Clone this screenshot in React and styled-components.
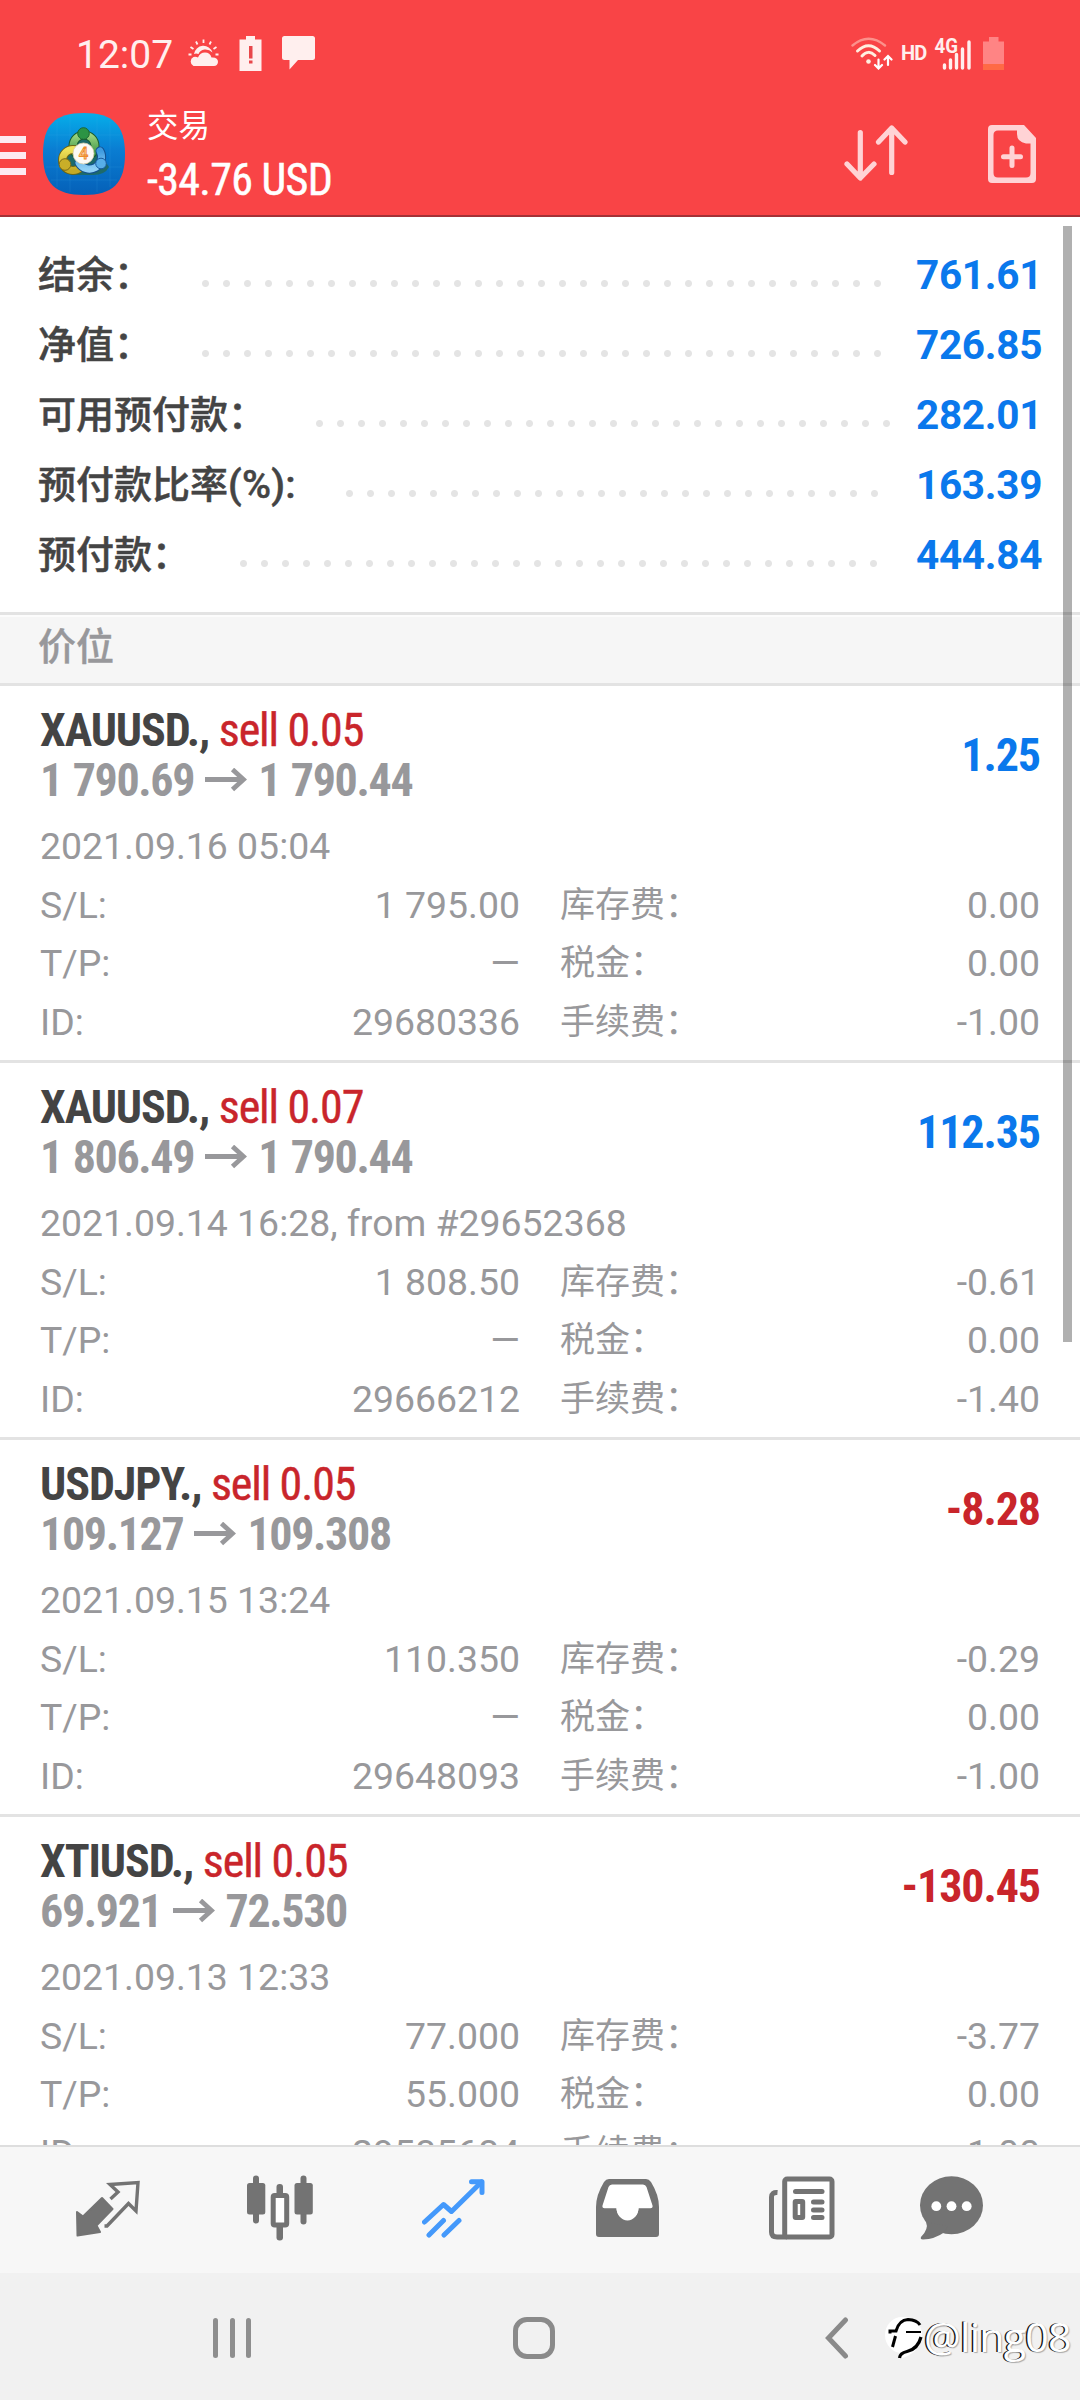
import React from 'react';
import styled, { createGlobalStyle } from 'styled-components';

const GlobalStyle = createGlobalStyle`
  * {
    box-sizing: border-box;
  }
  body {
    margin: 0;
    background: #fff;
    font-family: Roboto, 'Noto Sans CJK SC', sans-serif;
  }
  svg {
    display: block;
    flex: none;
  }
`;

const summary = [
  { label: '结余：', value: '761.61' },
  { label: '净值：', value: '726.85' },
  { label: '可用预付款：', value: '282.01' },
  { label: '预付款比率', unit: '(%):', value: '163.39' },
  { label: '预付款：', value: '444.84' },
];

const positions = [
  {
    symbol: 'XAUUSD.,',
    side: 'sell 0.05',
    open: '1 790.69',
    current: '1 790.44',
    profit: '1.25',
    time: '2021.09.16 05:04',
    sl: '1 795.00',
    tp: '—',
    id: '29680336',
    swap: '0.00',
    tax: '0.00',
    fee: '-1.00',
  },
  {
    symbol: 'XAUUSD.,',
    side: 'sell 0.07',
    open: '1 806.49',
    current: '1 790.44',
    profit: '112.35',
    time: '2021.09.14 16:28, from #29652368',
    sl: '1 808.50',
    tp: '—',
    id: '29666212',
    swap: '-0.61',
    tax: '0.00',
    fee: '-1.40',
  },
  {
    symbol: 'USDJPY.,',
    side: 'sell 0.05',
    open: '109.127',
    current: '109.308',
    profit: '-8.28',
    time: '2021.09.15 13:24',
    sl: '110.350',
    tp: '—',
    id: '29648093',
    swap: '-0.29',
    tax: '0.00',
    fee: '-1.00',
  },
  {
    symbol: 'XTIUSD.,',
    side: 'sell 0.05',
    open: '69.921',
    current: '72.530',
    profit: '-130.45',
    time: '2021.09.13 12:33',
    sl: '77.000',
    tp: '55.000',
    id: '29585684',
    swap: '-3.77',
    tax: '0.00',
    fee: '-1.00',
  },
];

function WeatherIcon() {
  return (
    <svg width='31' height='28' viewBox='0 0 31 28' fill='#ffefee'>
      <path d='M6 15A9.5 9.5 0 0 1 24.5 13.5Q21 10 16.5 10.5Q12 11 10.5 15Q8 14 6 15Z' />
      <path d='M5.5 27A5 5 0 0 1 5.5 18Q8 17.5 10 18.5Q12 13.5 17 13.5Q22 13.5 23.5 18.5Q30 18 30 23Q29.5 27 26 27Z' />
      <path
        d='M15.5 0.5V4M8 2.5L9.5 5.5M23 2.5L21.5 5.5M2.5 8L5.5 10M28.5 8L25.5 10M0.5 15.5H3.5M27.5 15.5H30.5'
        stroke='#ffefee'
        strokeWidth='1.8'
      />
    </svg>
  );
}

function BatteryAlertIcon() {
  return (
    <svg width='23' height='35' viewBox='0 0 23 35'>
      <path d='M7 0H16V3.5H22.5V35H0.5V3.5H7Z' fill='#ffefee' />
      <path d='M10 10H13.5V22.5H10ZM10 24.5H13.5V27.5H10Z' fill='#e8474a' />
    </svg>
  );
}

function MessageIcon() {
  return (
    <svg width='33' height='34' viewBox='0 0 33 34'>
      <path
        d='M2.5 0H30.5Q33 0 33 2.5V21.5Q33 24 30.5 24H16L7.5 33.5V24H2.5Q0 24 0 21.5V2.5Q0 0 2.5 0Z'
        fill='#ffefee'
      />
    </svg>
  );
}

function WifiIcon() {
  return (
    <svg width='42' height='33' viewBox='0 0 42 33' fill='none' stroke='#ffefdf' strokeLinecap='round'>
      <path d='M1.5 8.5Q17.5 -5 34 8.5' strokeWidth='2.4' opacity='0.45' />
      <path d='M6.5 14Q17.5 3.5 28.5 14' strokeWidth='3' />
      <path d='M11 19Q17.5 12 24 18.5' strokeWidth='3' />
      <circle cx='17.5' cy='24.5' r='2.3' fill='#ffefdf' stroke='none' />
      <path
        d='M27.5 22.5V31M24 28L27.5 31.5L31 28M37 28V19.5M33.5 22.5L37 19L40.5 22.5'
        stroke='#fff'
        strokeWidth='2.2'
      />
    </svg>
  );
}

function SignalIcon() {
  return (
    <svg width='39' height='33' viewBox='0 0 39 33' overflow='visible'>
      <text x='1.5' y='16' fontSize='19.5' fontWeight='700' fill='#ffefee' textLength='23.5' lengthAdjust='spacingAndGlyphs'>
        4G
      </text>
      <path
        d='M11.5 28V31M17.5 23V31M23.5 17.5V31M29.5 12V31M36 5V31'
        stroke='#ffefee'
        strokeWidth='3.4'
        strokeLinecap='round'
      />
    </svg>
  );
}

function BatteryIcon() {
  return (
    <svg width='21' height='33' viewBox='0 0 21 33'>
      <path d='M6 0H15.5V4.5H21V33H0V4.5H6Z' fill='#ff8484' />
      <path d='M0 27H21V33H0Z' fill='#ff6a45' />
    </svg>
  );
}

function Logo() {
  return (
    <svg width='82' height='82' viewBox='0 0 82 82'>
      <defs>
        <linearGradient id='logo-bg' x1='0' y1='0' x2='0' y2='1'>
          <stop offset='0' stopColor='#06aeea' />
          <stop offset='0.45' stopColor='#0a7dd2' />
          <stop offset='1' stopColor='#0560b8' />
        </linearGradient>
        <linearGradient id='logo-green' x1='0' y1='0' x2='0' y2='1'>
          <stop offset='0' stopColor='#9bd47e' />
          <stop offset='1' stopColor='#2d8a3c' />
        </linearGradient>
        <linearGradient id='logo-yellow' x1='0' y1='0' x2='0' y2='1'>
          <stop offset='0' stopColor='#f0e25a' />
          <stop offset='1' stopColor='#c4aa26' />
        </linearGradient>
        <linearGradient id='logo-blue' x1='0' y1='0' x2='0' y2='1'>
          <stop offset='0' stopColor='#3f9be0' />
          <stop offset='1' stopColor='#8fd0f5' />
        </linearGradient>
      </defs>
      <path
        d='M41 0C70 0 82 12 82 41C82 70 70 82 41 82C12 82 0 70 0 41C0 12 12 0 41 0Z'
        fill='url(#logo-bg)'
      />
      <path d='M14 8V74M27 3V79M54 3V79M67 8V74M5 22H77M3 54H79M8 67H74' stroke='#4fb4ee' strokeWidth='0.7' opacity='0.2' />
      {/* three interlocked rings */}
      <path d='M41 16L66 54Q62 62 50 62H32Q20 62 17 54Z' fill='#1d6a6b' />
      <g fill='none' strokeLinecap='round'>
        <circle cx='41' cy='33' r='11' stroke='#185c30' strokeWidth='9' />
        <circle cx='41' cy='33' r='11' stroke='url(#logo-green)' strokeWidth='7' />
        <circle cx='30' cy='47' r='10.5' stroke='#6e6515' strokeWidth='9' />
        <circle cx='30' cy='47' r='10.5' stroke='url(#logo-yellow)' strokeWidth='7' />
        <path d='M57 38A11.5 11.5 0 1 1 36 50' stroke='#12508f' strokeWidth='9' />
        <path d='M57 38A11.5 11.5 0 1 1 36 50' stroke='url(#logo-blue)' strokeWidth='7' />
      </g>
      <circle cx='40.5' cy='20.5' r='5.8' fill='#2c9444' stroke='#1c6431' />
      <circle cx='22' cy='51.5' r='5.8' fill='#c9ae28' stroke='#7a6a18' />
      <circle cx='58' cy='50.5' r='5.3' fill='#57aee8' stroke='#195ca0' />
      <circle cx='40.5' cy='40.5' r='10.5' fill='#fcfaf5' stroke='#d8cfae' strokeWidth='0.8' />
      <text x='40.5' y='46.3' fontSize='16.5' fontWeight='500' fill='#fbd9a4' stroke='#ee8a2a' strokeWidth='0.9' textAnchor='middle'>
        4
      </text>
    </svg>
  );
}

function SortIcon() {
  return (
    <svg width='64' height='56' viewBox='0 0 64 56' fill='none' stroke='#ffd3d5' strokeWidth='5.2' strokeLinecap='round' strokeLinejoin='round'>
      <path d='M16.3 7.5V52M3 39L16.3 53L30 39' />
      <path d='M47.7 47.5V3M34.5 17L47.7 3L61 17' />
    </svg>
  );
}

function NewOrderIcon() {
  return (
    <svg width='48' height='58' viewBox='0 0 48 58'>
      <path
        fillRule='evenodd'
        d='M4 0H36L48 13V54Q48 58 44 58H4Q0 58 0 54V4Q0 0 4 0ZM10 5.5Q5.5 5.5 5.5 10V48Q5.5 52.5 10 52.5H38Q42.5 52.5 42.5 48V18.5H38Q29 17 29 9V5.5Z'
        fill='#ffd3d5'
      />
      <path d='M24 23V40.5M15.5 31.7H32.5' stroke='#ffd3d5' strokeWidth='5' strokeLinecap='round' />
    </svg>
  );
}

function PriceArrow() {
  return (
    <svg width='42' height='24' viewBox='0 0 42 24' fill='none' stroke='#98989b' strokeWidth='4.8'>
      <path d='M0 11.5H39M27.5 1.5L38.5 11.5L27.5 21.5' />
    </svg>
  );
}

function QuotesIcon() {
  return (
    <svg width='64' height='57' viewBox='0 0 64 57'>
      <path d='M26 18L36.5 29L20.5 45.5L24 52L1.5 55.5L1 32L7 36.5Z' fill='#737373' stroke='#737373' strokeWidth='2' strokeLinejoin='round' />
      <path d='M34.5 19L42 12L34 4.500L62 2.500L60 31L52.500 23.500L31 46H28.500' fill='none' stroke='#737373' strokeWidth='3.4' />
    </svg>
  );
}

function ChartIcon() {
  return (
    <svg width='66' height='66' viewBox='0 0 66 66' fill='#737373'>
      <rect x='6' y='0.5' width='6' height='48' rx='3' />
      <rect x='0' y='8' width='18.3' height='31.5' rx='2.5' />
      <rect x='29.5' y='9' width='6.5' height='14' rx='3' />
      <rect x='29.5' y='48' width='6.5' height='17.5' rx='3' />
      <rect x='26.2' y='20.5' width='13.5' height='29.5' rx='1.5' fill='#fff' stroke='#737373' strokeWidth='5' />
      <rect x='53.5' y='0.5' width='6' height='49' rx='3' />
      <rect x='47.5' y='8' width='18.3' height='31.5' rx='2.5' />
    </svg>
  );
}

function TradeIcon() {
  return (
    <svg width='63' height='59' viewBox='0 0 63 59' fill='none' stroke='#4499fb' strokeWidth='5' strokeLinecap='round' strokeLinejoin='round'>
      <path d='M2.5 43L21.5 25.5L29.5 32.5L59.5 3' />
      <path d='M49.5 2.7H60V13.5' />
      <path d='M7 56L21.5 41.5M22 56L37 41.5' />
    </svg>
  );
}

function HistoryIcon() {
  return (
    <svg width='63' height='58' viewBox='0 0 63 58'>
      <path d='M14 3H49L60 29H3Z' fill='#fff' />
      <path
        fillRule='evenodd'
        d='M13 0H50Q53 0 55 3Q63 16 63 28V55Q63 58 60 58H3Q0 58 0 55V28Q0 16 8 3Q10 0 13 0ZM16 5.5Q13.5 5.5 12.5 8L6.5 26.5Q6 29.2 8.5 29.2H20.5A11 11 0 0 0 42.5 29.2H54.5Q57 29.2 56.5 26.5L50.5 8Q49.5 5.5 47 5.5Z'
        fill='#737373'
      />
      <path d='M20.5 29A11 12.5 0 0 0 42.5 29Z' fill='#fff' />
    </svg>
  );
}

function NewsIcon() {
  return (
    <svg width='66' height='64' viewBox='0 0 66 64' fill='none' stroke='#737373' strokeWidth='5'>
      <path d='M8.5 16.5Q2.5 16 2.5 21V56Q2.5 61 8 61H18' />
      <rect x='15.7' y='3' width='47.3' height='58' rx='2.5' fill='#fff' />
      <path d='M26.5 15.5H53' strokeLinecap='round' />
      <rect x='26.2' y='25.5' width='7.5' height='16' rx='0.5' fill='#fff' strokeLinejoin='round' />
      <path d='M44.5 26H53M44.5 34H53M44.5 41.5H53' strokeLinecap='round' />
    </svg>
  );
}

function ChatIcon() {
  return (
    <svg width='63' height='64' viewBox='0 0 63 64' fill='#737373'>
      <ellipse cx='31.5' cy='29.2' rx='31.5' ry='29' />
      <path d='M6 46Q9 53 1 61Q0 63.5 3 63.5Q15 63 24 56.5L28 50Z' />
      <circle cx='16.3' cy='30.2' r='4.9' fill='#fff' />
      <circle cx='31.5' cy='30.2' r='4.9' fill='#fff' />
      <circle cx='46.7' cy='30.2' r='4.9' fill='#fff' />
    </svg>
  );
}

function WatermarkIcon() {
  return (
    <svg width='40' height='44' viewBox='0 0 40 44'>
      <path d='M18 1A17 18 0 1 0 18 37L15 43Q36 38 38 19A18 18 0 0 0 18 1Z' fill='#fff' />
      <path d='M6 17.5V15H12Q15 4 24 3.5Q33 4 36 9' fill='none' stroke='#000' strokeWidth='3' />
      <path d='M11.5 20L8.5 31' stroke='#000' strokeWidth='3' />
      <path d='M22 16H37' stroke='#000' strokeWidth='2' />
      <path d='M37 21Q34 33 23 35.5Q16 37 15.5 42' fill='none' stroke='#000' strokeWidth='3.2' />
    </svg>
  );
}

function Account() {
  return (
    <Summary>
      {summary.map(({ label, unit, value }) => (
        <SummaryRow key={label}>
          <SummaryLabel>
            {label}
            {unit && <Unit>{unit}</Unit>}
          </SummaryLabel>
          <Leader />
          <SummaryValue>{value}</SummaryValue>
        </SummaryRow>
      ))}
    </Summary>
  );
}

function Position({ item }) {
  return (
    <Card>
      <CardHead>
        <div>
          <Title>
            {item.symbol} <Side>{item.side}</Side>
          </Title>
          <Prices>
            <span>{item.open}</span>
            <PriceArrow />
            <span>{item.current}</span>
          </Prices>
        </div>
        <Profit $loss={item.profit.startsWith('-')}>{item.profit}</Profit>
      </CardHead>
      <Time>{item.time}</Time>
      <Details>
        <Detail label='S/L:' value={item.sl} />
        <Detail cjk label='库存费：' value={item.swap} />
        <Detail label='T/P:' value={item.tp} />
        <Detail cjk label='税金：' value={item.tax} />
        <Detail label='ID:' value={item.id} />
        <Detail cjk label='手续费：' value={item.fee} />
      </Details>
    </Card>
  );
}

function Detail({ label, value, cjk }) {
  return (
    <DetailCell>
      <DetailLabel $cjk={cjk}>{label}</DetailLabel>
      {value === '—' ? <Dash>{value}</Dash> : <span>{value}</span>}
    </DetailCell>
  );
}

function App() {
  return (
    <Screen>
      <GlobalStyle />
      <Header>
        <StatusBar>
          <Clock>12:07</Clock>
          <StatusIcons $gap={20}>
            <WeatherIcon />
            <BatteryAlertIcon />
            <MessageIcon />
          </StatusIcons>
          <StatusIcons $gap={11} $end>
            <WifiIcon />
            <Hd>HD</Hd>
            <SignalIcon />
            <BatteryIcon />
          </StatusIcons>
        </StatusBar>
        <Toolbar>
          <Menu>
            <i />
            <i />
            <i />
          </Menu>
          <Logo />
          <Heading>
            <Caption>交易</Caption>
            <Total>-34.76 USD</Total>
          </Heading>
          <Actions>
            <SortIcon />
            <NewOrderIcon />
          </Actions>
        </Toolbar>
      </Header>
      <Content>
        <Account />
        <SectionTitle>价位</SectionTitle>
        {positions.map((item) => (
          <Position key={item.id} item={item} />
        ))}
        <Scrollbar />
      </Content>
      <TabBar>
        <QuotesIcon />
        <ChartIcon />
        <TradeIcon />
        <HistoryIcon />
        <NewsIcon />
        <ChatIcon />
      </TabBar>
      <NavBar>
        <Recents>
          <i />
          <i />
          <i />
        </Recents>
        <Home />
        <svg width='24' height='42' viewBox='0 0 24 42' fill='none' stroke='#8a8a8a' strokeWidth='5' strokeLinecap='round'>
          <path d='M20.5 3L3.5 21L20.5 39' />
        </svg>
        <Watermark>
          <WatermarkIcon />
          <span>@ling08</span>
        </Watermark>
      </NavBar>
    </Screen>
  );
}

const Screen = styled.div`
  display: flex;
  flex-direction: column;
  width: 1080px;
  height: 2400px;
  overflow: hidden;
`;

const Header = styled.header`
  flex: none;
  height: 217px;
  background: #f94446;
  border-bottom: 2px solid #a43237;
`;

const StatusBar = styled.div`
  display: flex;
  align-items: center;
  height: 104px;
  padding: 2px 76px 0 76px;
`;

const Clock = styled.span`
  width: 112px;
  font-size: 39px;
  line-height: 46px;
  padding-top: 3px;
  color: #ffefee;
`;

const StatusIcons = styled.div`
  display: flex;
  align-items: center;
  gap: ${({ $gap }) => $gap}px;
  margin-left: ${({ $end }) => ($end ? 'auto' : '0')};
`;

const Hd = styled.span`
  width: 28px;
  margin: 0 -7px 0 -3px;
  font-size: 20px;
  font-weight: 700;
  line-height: 24px;
  color: #ffefee;
  letter-spacing: -0.8px;
`;

const Toolbar = styled.div`
  display: flex;
  height: 111px;
  padding-right: 44px;
  > svg {
    margin: 9px 0 0 17px;
  }
`;

const Menu = styled.div`
  display: flex;
  flex-direction: column;
  gap: 9px;
  width: 26px;
  padding-top: 32px;
  i {
    height: 7px;
    background: #fdeaf2;
  }
`;

const Heading = styled.div`
  margin-left: 22px;
  color: #fff;
`;

const Caption = styled.div`
  font-size: 31.5px;
  line-height: 40px;
  margin: 3px 0 6px;
`;

const Total = styled.div`
  font-family: 'Roboto Condensed', Roboto, sans-serif;
  font-stretch: 75%;
  font-size: 44px;
  line-height: 54px;
  letter-spacing: -0.7px;
  -webkit-text-stroke: 0.5px #fff;
`;

const Actions = styled.div`
  display: flex;
  gap: 80px;
  margin-left: auto;
  padding-top: 21px;
`;

const Content = styled.main`
  position: relative;
  flex: none;
  height: 1928px;
  overflow: hidden;
`;

const Summary = styled.section`
  height: 398px;
  padding: 23px 38px 0 38px;
  border-bottom: 3px solid #e3e3e3;
`;

const SummaryRow = styled.div`
  display: flex;
  height: 70px;
  line-height: 70px;
`;

const SummaryLabel = styled.span`
  font-size: 38px;
  font-weight: 500;
  color: #444;
  white-space: nowrap;
  -webkit-text-stroke: 0.5px #444;
`;

const Unit = styled.span`
  font-size: 39.5px;
  letter-spacing: 0.2px;
`;

const Leader = styled.span`
  flex: 1;
  margin: 0 25px 0 50px;
  background: radial-gradient(circle at 3.5px 43.5px, #e4e4e4 3px, transparent 4px) 0 0 / 21px 70px repeat-x;
`;

const SummaryValue = styled.span`
  width: 126px;
  font-size: 40.5px;
  font-weight: 700;
  letter-spacing: -0.3px;
  color: #0a78ec;
`;

const SectionTitle = styled.h2`
  height: 71px;
  margin: 0;
  padding-left: 38px;
  font-size: 38px;
  font-weight: 500;
  line-height: 60px;
  color: #98989b;
  background: #f6f6f6;
  border-top: 2px solid #fcfcfc;
  border-bottom: 3px solid #e3e3e3;
  -webkit-text-stroke: 0.4px #98989b;
`;

const Card = styled.article`
  height: 377px;
  padding: 19px 40px 0;
  color: #98989b;
  border-bottom: 3px solid #e3e3e3;
`;

const CardHead = styled.div`
  display: flex;
  justify-content: space-between;
  font-family: 'Roboto Condensed', Roboto, sans-serif;
  font-stretch: 75%;
  font-size: 46px;
  font-weight: 700;
  line-height: 50px;
  letter-spacing: -1.1px;
  white-space: nowrap;
`;

const Title = styled.div`
  color: #444;
`;

const Side = styled.span`
  font-weight: 400;
  color: #c9252b;
  -webkit-text-stroke: 0.4px #c9252b;
`;

const Prices = styled.div`
  display: flex;
  align-items: center;
  gap: 11px;
  letter-spacing: -1.35px;
  word-spacing: 1.5px;
`;

const Profit = styled.span`
  padding-top: 25px;
  color: ${({ $loss }) => ($loss ? '#c9252b' : '#0a78ec')};
`;

const Time = styled.div`
  margin-top: 11.5px;
  margin-bottom: 0.5px;
  font-size: 37.4px;
  line-height: 58.5px;
`;

const Details = styled.div`
  display: grid;
  grid-template-columns: 480px 480px;
  column-gap: 40px;
`;

const DetailCell = styled.div`
  display: flex;
  justify-content: space-between;
  font-size: 37.4px;
  line-height: 58.5px;
`;

const DetailLabel = styled.span`
  font-size: ${({ $cjk }) => ($cjk ? '35px' : 'inherit')};
  padding-top: ${({ $cjk }) => ($cjk ? '1px' : '0')};
  margin-bottom: ${({ $cjk }) => ($cjk ? '-1px' : '0')};
`;

const Dash = styled.span`
  font-size: 38px;
`;

const Scrollbar = styled.div`
  position: absolute;
  top: 9px;
  right: 8px;
  width: 9px;
  height: 1116px;
  background: rgba(0, 0, 0, 0.31);
`;

const TabBar = styled.nav`
  display: grid;
  grid-template-columns: 172px 172px 174px 175px 174px 124px;
  place-items: center;
  flex: none;
  height: 128px;
  padding: 0 0 4px 22px;
  background: #f7f7f7;
  border-top: 2px solid #dedede;
`;

const NavBar = styled.nav`
  display: flex;
  align-items: center;
  flex: 1;
  padding: 3px 0 0 213px;
  background: #f1f1f1;
`;

const Recents = styled.div`
  display: flex;
  justify-content: space-between;
  width: 38px;
  height: 40px;
  i {
    width: 5px;
    border-radius: 3px;
    background: #8e8e8e;
  }
`;

const Home = styled.div`
  width: 42px;
  height: 42px;
  margin: 0 270px 0 262px;
  border: 5px solid #8a8a8a;
  border-radius: 14px;
`;

const Watermark = styled.div`
  display: flex;
  align-items: center;
  margin-left: 35px;
  font-family: 'Open Sans', 'Noto Sans', sans-serif;
  font-size: 41px;
  font-weight: 400;
  line-height: 46px;
  letter-spacing: -0.7px;
  color: #fff;
  text-shadow: -1.5px -0.5px 0 #111, 1px 1px 1px #aaa;
  span {
    padding-bottom: 4px;
  }
`;

export default App;
